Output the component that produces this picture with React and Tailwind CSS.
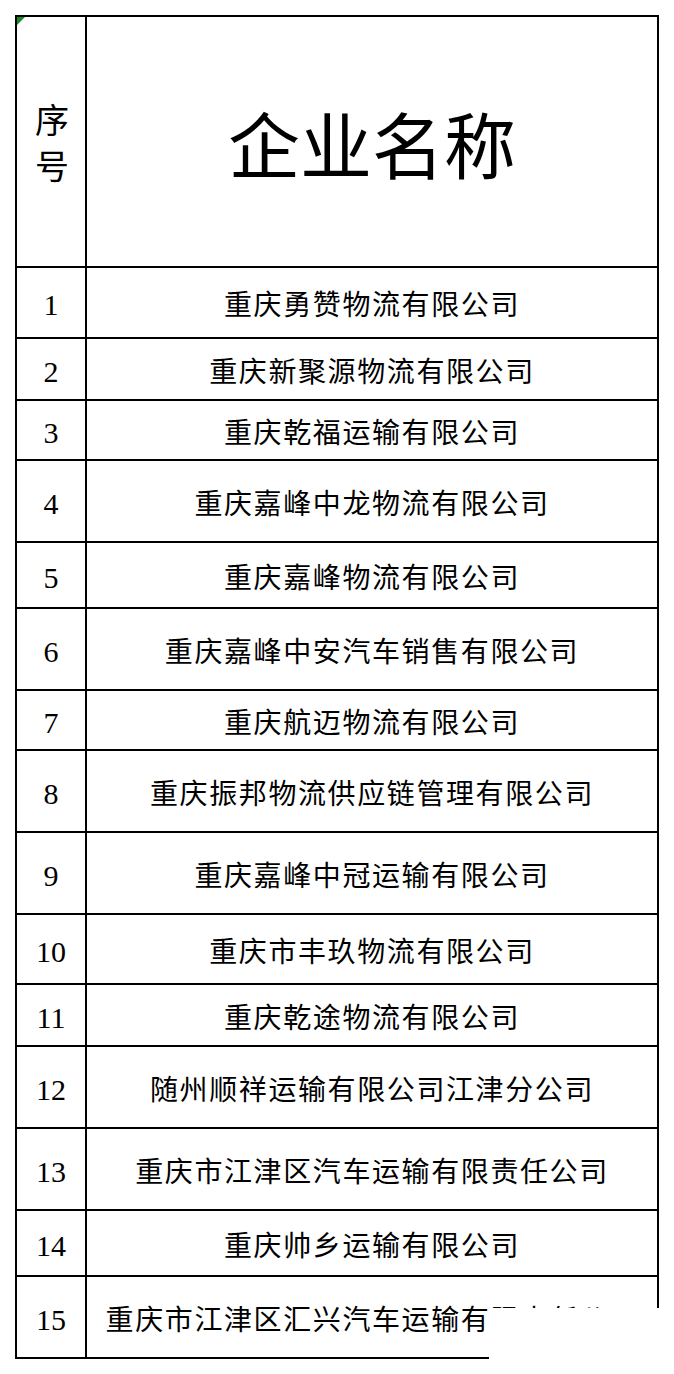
import React from 'react';

const rows = [
  { no: 1, name: '重庆勇赞物流有限公司', h: 'h-[71px]' },
  { no: 2, name: '重庆新聚源物流有限公司', h: 'h-[62px]' },
  { no: 3, name: '重庆乾福运输有限公司', h: 'h-[60px]' },
  { no: 4, name: '重庆嘉峰中龙物流有限公司', h: 'h-[82px]' },
  { no: 5, name: '重庆嘉峰物流有限公司', h: 'h-[66px]' },
  { no: 6, name: '重庆嘉峰中安汽车销售有限公司', h: 'h-[82px]' },
  { no: 7, name: '重庆航迈物流有限公司', h: 'h-[60px]' },
  { no: 8, name: '重庆振邦物流供应链管理有限公司', h: 'h-[82px]' },
  { no: 9, name: '重庆嘉峰中冠运输有限公司', h: 'h-[82px]' },
  { no: 10, name: '重庆市丰玖物流有限公司', h: 'h-[70px]' },
  { no: 11, name: '重庆乾途物流有限公司', h: 'h-[62px]' },
  { no: 12, name: '随州顺祥运输有限公司江津分公司', h: 'h-[82px]' },
  { no: 13, name: '重庆市江津区汽车运输有限责任公司', h: 'h-[82px]' },
  { no: 14, name: '重庆帅乡运输有限公司', h: 'h-[66px]' },
  { no: 15, name: '重庆市江津区汇兴汽车运输有限责任公司', h: 'h-[82px]' },
];

const font = 'font-["Liberation_Serif","Noto_Sans_CJK_SC",serif]';

export default function App() {
  return (
    <div className={`relative w-[674px] h-[1374px] bg-white text-black pt-[15px] pl-[15px] ${font}`}>
      <div className="w-[644px] border-t-2 border-x-2 border-black">
        {/* Header */}
        <div className="flex h-[251px] border-b-2 border-black">
          <div className="w-[70px] shrink-0 border-r-2 border-black flex flex-col items-center justify-center pt-[6px] pl-[2px] text-[34px] leading-[46px]">
            <span>序</span>
            <span>号</span>
          </div>
          <div className="flex-1 flex items-center justify-center pt-[14px] text-[72px] leading-none">
            企业名称
          </div>
        </div>

        {/* Rows */}
        {rows.map((r) => (
          <div key={r.no} className={`flex ${r.h} border-b-2 border-black`}>
            <div className="w-[70px] shrink-0 border-r-2 border-black flex items-center justify-center pt-[5px] text-[30px] leading-none">
              {r.no}
            </div>
            <div className="flex-1 flex items-center justify-center pt-[7px] text-[28px] leading-none tracking-[1.6px] whitespace-nowrap overflow-hidden">
              {r.name}
            </div>
          </div>
        ))}
      </div>

      {/* cell marker */}
      <svg className="absolute left-[17px] top-[17px]" width="8" height="8" viewBox="0 0 8 8">
        <polygon points="0,0 8,0 0,8" fill="#1e8a1e" />
      </svg>

      {/* cropped corner */}
      <div className="absolute left-[489px] top-[1308px] w-[185px] h-[66px] bg-white" />
    </div>
  );
}
